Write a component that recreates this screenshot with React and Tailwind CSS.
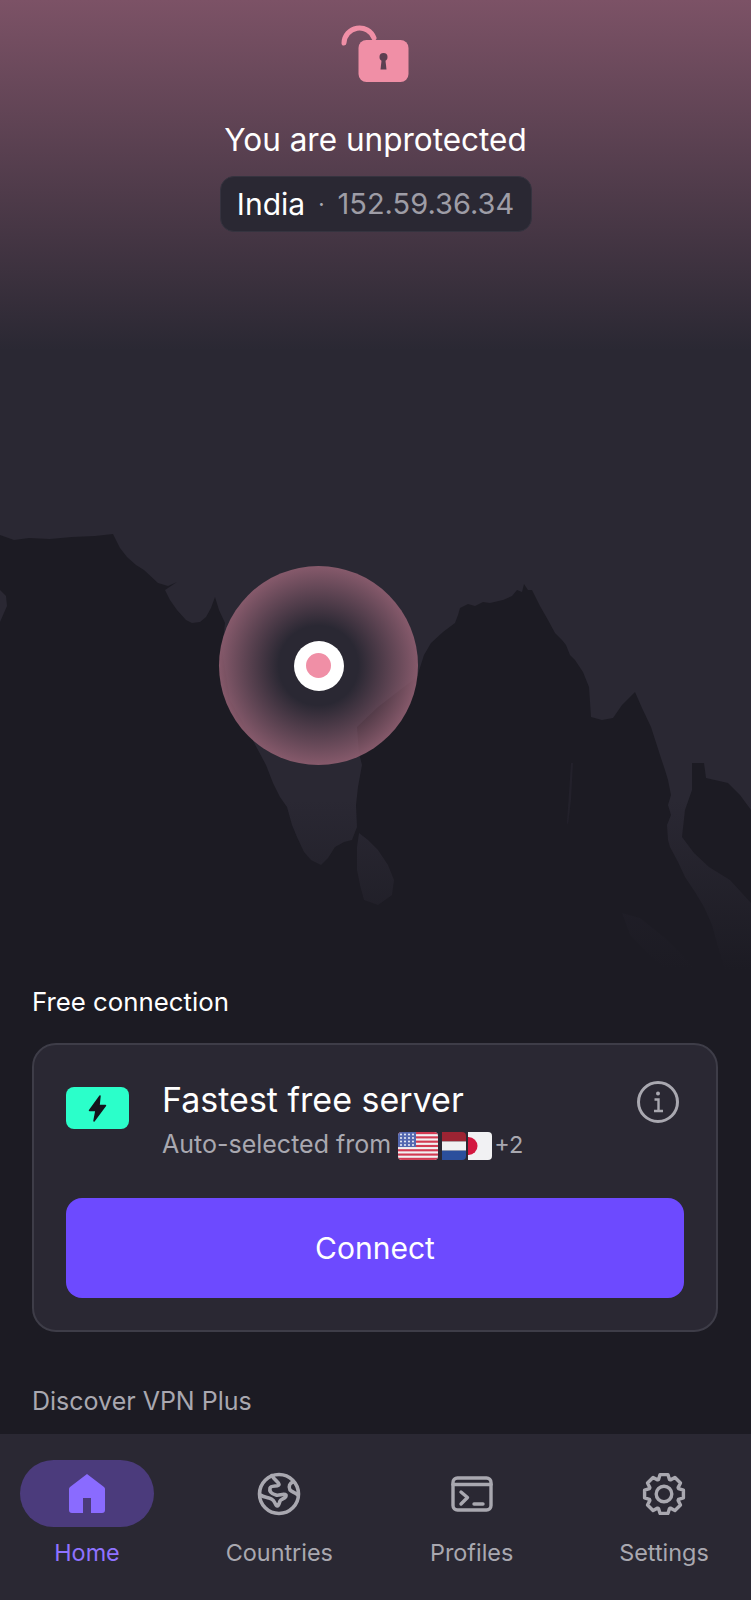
const gearPoints = () => {
  const pts = [];
  for (let i = 0; i < 8; i++) {
    const a = (i * Math.PI) / 4 - Math.PI / 2;
    const w = 0.2;
    [[15.5, a - 0.36], [19.8, a - w], [19.8, a + w], [15.5, a + 0.36]].forEach(([r, t]) => {
      pts.push(`${(22 + r * Math.cos(t)).toFixed(2)},${(22 + r * Math.sin(t)).toFixed(2)}`);
    });
  }
  return pts.join(" ");
};

function WorldMap() {
  return (
    <svg className="absolute left-0 top-0" width="751" height="1440" viewBox="0 0 751 1440">
      <defs>
        <linearGradient id="fade" x1="0" y1="800" x2="0" y2="970" gradientUnits="userSpaceOnUse">
          <stop offset="0" stopColor="#1c1b23" stopOpacity="0" />
          <stop offset="1" stopColor="#1c1b23" stopOpacity="1" />
        </linearGradient>
      </defs>
      <path
        fill="#1c1b23"
        d="M0 535 L14 540 L29 538 L50 539 L72 537 L95 536 L113 534 L120 548 L127 557 L136 565 L144 570 L158 583 L168 586 L177 582 L165 590 L170 600 L177 610 L186 620 L192 623 L200 622 L206 617 L211 608 L215 597 L219 610 L225 623 L222 650 L230 700 L250 735 L266 765 L273 783 L280 797 L287 807 L292 825 L297 837 L304 852 L311 860 L321 865 L328 858 L335 847 L344 842 L352 840 L357 827 L356 805 L358 787 L362 765 L359 753 L357 727 L378 707 L400 690 L417 677 L424 655 L431 643 L443 632 L455 623 L458 615 L460 608 L468 604 L475 606 L483 602 L490 603 L503 600 L512 596 L517 590 L522 592 L524 584 L528 590 L532 590 L540 606 L548 620 L555 633 L562 640 L566 645 L570 655 L575 660 L583 672 L589 687 L590 702 L591 717 L602 720 L613 718 L622 705 L635 692 L642 708 L651 727 L660 755 L665 770 L668 780 L671 795 L668 805 L671 815 L667 825 L668 840 L670 847 L678 862 L685 877 L695 892 L704 907 L712 925 L718 947 L730 985 L751 985 L751 903 L730 880 L709 867 L694 853 L682 837 L685 810 L692 790 L692 763 L704 763 L706 778 L728 783 L740 795 L751 810 L751 1440 L0 1440 Z"
      />
      <path fill="#2a2833" d="M359 833 L368 840 L378 850 L388 865 L394 880 L392 895 L378 905 L364 900 L360 885 L357 870 L357 847 Z" />
      <path fill="#2a2833" d="M0 590 L6 596 L7 606 L0 622 Z" />
      <path fill="#2a2833" opacity="0.6" d="M622 913 L640 918 L665 938 L694 967 L680 985 L650 955 L630 935 Z" />
      <path fill="#2a2833" opacity="0.5" d="M571 763 L573 763 L571 800 L568 825 L567 822 Z" />
      <rect x="0" y="800" width="751" height="640" fill="url(#fade)" />
    </svg>
  );
}

function LockIcon() {
  return (
    <svg width="80" height="64" viewBox="0 0 80 64" fill="none">
      <path d="M8 23 A15.5 15.5 0 0 1 38 18" stroke="#f08fa6" strokeWidth="5" strokeLinecap="round" />
      <rect x="22.5" y="20" width="50" height="42" rx="8" fill="#f08fa6" />
      <circle cx="47.5" cy="37" r="4" fill="#5c3f51" />
      <path d="M45.8 38 H49.2 L50.5 49.5 H44.5 Z" fill="#5c3f51" />
    </svg>
  );
}

function Flags() {
  const stripes = [0, 1, 2, 3, 4, 5, 6];
  return (
    <svg width="94" height="28" viewBox="0 0 94 28" className="ml-[7px] mt-[2px]">
      <defs>
        <clipPath id="us"><rect x="0" y="0" width="40" height="28" rx="4" /></clipPath>
        <clipPath id="nl"><path d="M44 0 H64 A4 4 0 0 1 68 4 V24 A4 4 0 0 1 64 28 H44 Z" /></clipPath>
        <clipPath id="jp"><path d="M70 0 H90 A4 4 0 0 1 94 4 V24 A4 4 0 0 1 90 28 H70 Z" /></clipPath>
      </defs>
      <g clipPath="url(#us)">
        <rect width="40" height="28" fill="#f1f1f3" />
        {stripes.map((s) => (
          <rect key={s} x="0" y={s * 4.3} width="40" height="2.15" fill="#d23a52" />
        ))}
        <rect width="18" height="15" fill="#5468b0" />
        {[2.5, 6, 9.5, 13].map((y) =>
          [3, 7, 11, 15].map((x) => <circle key={`${x}-${y}`} cx={x} cy={y} r="0.9" fill="#ffffff" />)
        )}
      </g>
      <g clipPath="url(#nl)">
        <rect x="44" y="0" width="24" height="9.4" fill="#9c2433" />
        <rect x="44" y="9.4" width="24" height="9.3" fill="#f1f1f3" />
        <rect x="44" y="18.7" width="24" height="9.3" fill="#2b4f9c" />
      </g>
      <g clipPath="url(#jp)">
        <rect x="70" y="0" width="24" height="28" fill="#f1f1f3" />
        <circle cx="70.5" cy="14" r="9" fill="#d3173f" />
      </g>
    </svg>
  );
}

function InfoIcon() {
  return (
    <svg width="42" height="42" viewBox="0 0 42 42" fill="none" stroke="#a9a8b0">
      <circle cx="21" cy="21" r="19.5" strokeWidth="3" />
      <circle cx="21" cy="12.5" r="2" fill="#a9a8b0" stroke="none" />
      <path d="M17.5 18.5 H21.5 V29.5 M17 30 H26" strokeWidth="2.4" />
    </svg>
  );
}

function NavIcon({ name }) {
  if (name === "home") {
    return (
      <svg width="44" height="44" viewBox="0 0 44 44">
        <path
          fillRule="evenodd"
          fill="#8a6bff"
          d="M22 2 L39 15 A2.5 2.5 0 0 1 40 17 V38 A3 3 0 0 1 37 41 H7 A3 3 0 0 1 4 38 V17 A2.5 2.5 0 0 1 5 15 Z M18 26 V41 H26 V26 Z"
        />
      </svg>
    );
  }
  if (name === "globe") {
    return (
      <svg width="44" height="44" viewBox="0 0 44 44" fill="none" stroke="#a9a8b0" strokeWidth="3.6" strokeLinejoin="round" strokeLinecap="round">
        <circle cx="22" cy="22" r="19.5" />
        <path d="M15 3.5 C17 8 21 9 22 12.5 C22 15 14 13 13 16 C12 20 15 22 19 23 C22 24 27 21 29 23 C30 26 24 27 23 29 C22 32 21 36 19 33 C17 29 16 27 12 26 C9 25 6 25 3.5 23" />
        <path d="M36 10 C33 11 31 14 33 18 C35 20 37 20 41 23" />
      </svg>
    );
  }
  if (name === "terminal") {
    return (
      <svg width="44" height="44" viewBox="0 0 44 44" fill="none" stroke="#a9a8b0" strokeWidth="3.4" strokeLinecap="round" strokeLinejoin="round">
        <rect x="3" y="6" width="38" height="32" rx="4.5" />
        <path d="M3 12.5 H41" />
        <path d="M11 20 L17.5 25.5 L11 32" />
        <path d="M24 32 H33" />
      </svg>
    );
  }
  return (
    <svg width="44" height="44" viewBox="0 0 44 44" fill="none" stroke="#a9a8b0" strokeWidth="3.4" strokeLinejoin="round">
      <polygon points={gearPoints()} />
      <circle cx="22" cy="22" r="7.8" />
    </svg>
  );
}

const TABS = [
  { id: "home", label: "Home", active: true },
  { id: "globe", label: "Countries" },
  { id: "terminal", label: "Profiles" },
  { id: "settings", label: "Settings" }
];

export default function App() {
  return (
    <div className="relative w-[751px] h-[1600px] overflow-hidden bg-[#2a2833] font-['Inter',sans-serif]">
      <WorldMap />
      <div className="absolute left-0 top-0 w-full h-[350px] bg-gradient-to-b from-[#7c5266] to-transparent" />

      {/* location marker on the map */}
      <div className="absolute left-[219px] top-[566px] w-[199px] h-[199px] rounded-full flex items-center justify-center bg-[radial-gradient(circle_closest-side,rgba(142,94,112,0)_40%,rgba(142,94,112,0.92)_100%)]">
        <div className="w-[50px] h-[50px] rounded-full bg-white flex items-center justify-center">
          <div className="w-[25px] h-[25px] rounded-full bg-[#f08fa6]" />
        </div>
      </div>

      <div className="relative flex flex-col h-full">
        <header className="flex flex-col items-center pt-5">
          <LockIcon />
          <h1 className="mt-[36px] text-[31.5px] leading-[40px] font-normal text-white">You are unprotected</h1>
          <div className="mt-[16px] h-[56px] w-[312px] flex items-center justify-center rounded-[14px] bg-[#2a2833] border border-[#35333f] text-[30px]">
            <span className="text-white">India</span>
            <span className="mx-[13px] text-[#a9a8b0] text-[22px]">·</span>
            <span className="text-[29px] text-[#9e9da6]">152.59.36.34</span>
          </div>
        </header>

        <main className="mt-auto pl-[32px] pr-[33px] pb-[17px]">
          <h2 className="text-[25.8px] leading-[32px] font-normal text-white">Free connection</h2>
          <section className="mt-[25px] h-[289px] rounded-[24px] border-2 border-[#3e3d48] bg-[#2a2833] pl-[32px] pr-[32px] pt-[41px]">
            <div className="flex items-start">
              <div className="mt-[1px] w-[63px] h-[42px] rounded-[8px] bg-[#2bffca] flex items-center justify-center">
                <svg width="19" height="27" viewBox="0 0 19 27">
                  <path d="M12 1 L1.5 15.5 H8 L6 26 L17.5 10.5 H11 Z" fill="#16141c" stroke="#16141c" strokeWidth="1.5" strokeLinejoin="round" />
                </svg>
              </div>
              <div className="ml-[33px] flex-1 -mt-[8px]">
                <div className="text-[34px] leading-[44px] text-white">Fastest free server</div>
                <div className="flex items-center h-[34px] mt-[6px] text-[25px] text-[#a9a8b0]">
                  <span>Auto-selected from</span>
                  <Flags />
                  <span className="ml-[2px] text-[23.5px]">+2</span>
                </div>
              </div>
              <div className="-mt-[5px] mr-[5px]">
                <InfoIcon />
              </div>
            </div>
            <button className="mt-[36px] w-full h-[100px] rounded-[16px] bg-[#6d4aff] pt-[1px] text-[30px] text-white">Connect</button>
          </section>
          <h2 className="mt-[53px] text-[25px] leading-[32px] font-normal text-[#a9a8b0]">Discover VPN Plus</h2>
        </main>

        <nav className="h-[166px] bg-[#2a2833] flex justify-between px-5 pt-[26px]">
          {TABS.map((tab) => (
            <div key={tab.id} className="w-[134px] flex flex-col items-center">
              <div className={`w-[134px] h-[67px] rounded-full flex items-center justify-center ${tab.active ? "bg-[#4b3b7c]" : ""}`}>
                <NavIcon name={tab.id} />
              </div>
              <span className={`mt-[10px] text-[23.4px] leading-[32px] whitespace-nowrap ${tab.active ? "text-[#8f72ff]" : "text-[#a9a8b0]"}`}>{tab.label}</span>
            </div>
          ))}
        </nav>
      </div>
    </div>
  );
}
